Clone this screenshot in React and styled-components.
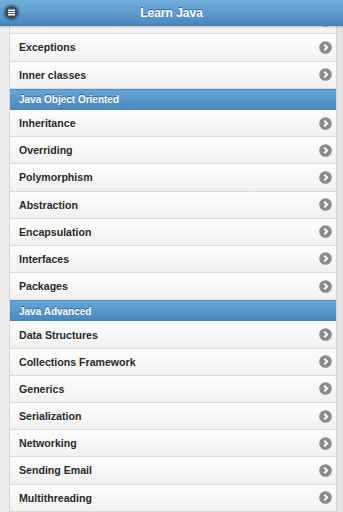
import React from 'react';
import styled, { createGlobalStyle } from 'styled-components';

const GlobalStyle = createGlobalStyle`
    html, body {
        margin: 0;
        padding: 0;
        background: #ececec;
        font-family: "Liberation Sans", Arial, sans-serif;
    }
`;

const Page = styled.div`
    display: flex;
    flex-direction: column;
    width: 343px;
    height: 512px;
    overflow: hidden;
`;

const Header = styled.div`
    position: relative;
    z-index: 2;
    display: flex;
    align-items: center;
    justify-content: center;
    height: 25px;
    flex-shrink: 0;
    background: linear-gradient(#74afdb, #4a87c0);
    border-bottom: 1px solid #3f77a8;
    box-shadow: 0 1px 2px rgba(0, 0, 0, 0.2);
`;

const Title = styled.h1`
    margin: 0;
    font-size: 12px;
    font-weight: bold;
    color: #fff;
    text-shadow: 0 -1px 0 #2f6393;
`;

const MenuButton = styled.div`
    position: absolute;
    left: 3px;
    top: 4px;
    width: 17px;
    height: 17px;
    border-radius: 50%;
    background: rgba(40, 70, 100, 0.35);
    display: flex;
    align-items: center;
    justify-content: center;
`;

const MenuInner = styled.div`
    width: 13px;
    height: 13px;
    border-radius: 50%;
    background: #3a4a5c;
    display: flex;
    align-items: center;
    justify-content: center;
`;

const Viewport = styled.div`
    flex: 1;
    overflow: hidden;
    padding: 0 6px 0 9px;
    background: linear-gradient(90deg, #eeeeee 0, #eeeeee 9px, #fff 9px, #fff 336px, #e4e4e4 336px);
`;

const List = styled.ul`
    list-style: none;
    margin: -18.8px 0 0;
    padding: 0;
    border-left: 1px solid #d6d6d6;
    border-right: 1px solid #d6d6d6;
`;

const Row = styled.li`
    display: flex;
    align-items: center;
    justify-content: space-between;
    height: 26.2px;
    padding: 0 4px 0 9px;
    border-bottom: 1px solid #dcdcdc;
    background: linear-gradient(#fefefe, #f1f1f1);
    font-size: 10.6px;
    font-weight: bold;
    color: #262626;
    text-shadow: 0 1px 0 #fff;
`;

const Divider = styled.li`
    display: flex;
    align-items: center;
    height: 20.2px;
    padding: 0 9px;
    background: linear-gradient(#66a6d6, #4886be);
    border-top: 1px solid #5590c3;
    font-size: 10px;
    font-weight: bold;
    color: #fff;
    text-shadow: 0 -1px 0 #2f6393;
`;

function Arrow() {
    return (
        <svg width="13" height="13" viewBox="0 0 13 13">
            <circle cx="6.5" cy="6.5" r="6.3" fill="#8a8a8a" />
            <path d="M5.3 3.6 L8.1 6.5 L5.3 9.4" fill="none" stroke="#fff" strokeWidth="2" />
        </svg>
    );
}

function MenuIcon() {
    return (
        <svg width="7" height="7" viewBox="0 0 7 7">
            <rect x="0" y="0.5" width="7" height="1.4" fill="#fff" />
            <rect x="0" y="2.8" width="7" height="1.4" fill="#fff" />
            <rect x="0" y="5.1" width="7" height="1.4" fill="#fff" />
        </svg>
    );
}

const sections = [
    { title: null, items: ['Exception Handling', 'Exceptions', 'Inner classes'] },
    {
        title: 'Java Object Oriented',
        items: ['Inheritance', 'Overriding', 'Polymorphism', 'Abstraction', 'Encapsulation', 'Interfaces', 'Packages'],
    },
    {
        title: 'Java Advanced',
        items: ['Data Structures', 'Collections Framework', 'Generics', 'Serialization', 'Networking', 'Sending Email', 'Multithreading', 'Applet Basics'],
    },
];

export default function App() {
    return (
        <Page>
            <GlobalStyle />
            <Header>
                <MenuButton>
                    <MenuInner>
                        <MenuIcon />
                    </MenuInner>
                </MenuButton>
                <Title>Learn Java</Title>
            </Header>
            <Viewport>
                <List>
                    {sections.map((section, i) => (
                        <React.Fragment key={i}>
                            {section.title && <Divider>{section.title}</Divider>}
                            {section.items.map((item) => (
                                <Row key={item}>
                                    {item}
                                    <Arrow />
                                </Row>
                            ))}
                        </React.Fragment>
                    ))}
                </List>
            </Viewport>
        </Page>
    );
}
